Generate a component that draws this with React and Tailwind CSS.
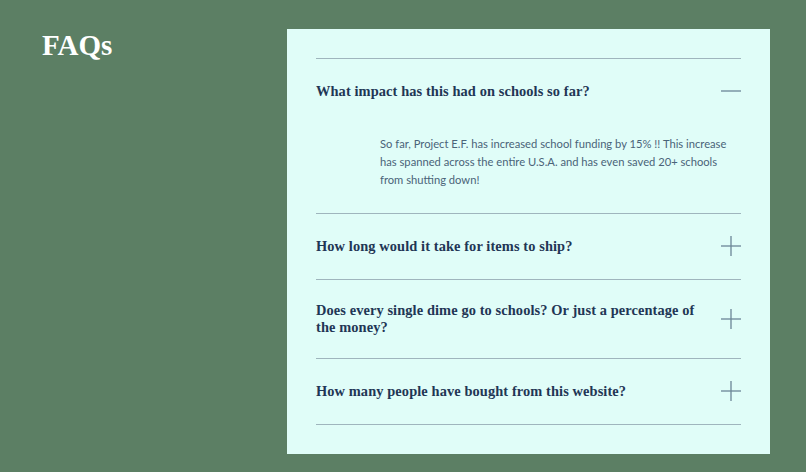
import React from "react";

const faqs = [
    {
        q: "What impact has this had on schools so far?",
        a: "So far, Project E.F. has increased school funding by 15% !! This increase has spanned across the entire U.S.A. and has even saved 20+ schools from shutting down!",
        open: true,
    },
    { q: "How long would it take for items to ship?" },
    { q: "Does every single dime go to schools? Or just a percentage of the money?" },
    { q: "How many people have bought from this website?" },
];

const Icon = ({ open }) => (
    <svg width="20" height="20" viewBox="0 0 20 20" className="shrink-0">
        <line x1="0" y1="10" x2="20" y2="10" stroke="#6b8696" strokeWidth="1.3" />
        {!open && <line x1="10" y1="0" x2="10" y2="20" stroke="#6b8696" strokeWidth="1.3" />}
    </svg>
);

const App = () => {
    return (
        <div className="min-h-[472px] w-full bg-[#5c7f64] flex items-start">
            <div className="w-[287px] pl-[42px] pt-[28px]">
                <h1 className="text-[29px] leading-[34px] font-bold text-white" style={{ fontFamily: '"Liberation Serif", serif' }}>
                    FAQs
                </h1>
            </div>

            <div className="mt-[29px] w-[483px] bg-[#e0fdf8] px-[29px] pt-[29px] pb-[29px]">
                {faqs.map((item) => (
                    <div key={item.q} className="border-t border-[#9fb5bd]">
                        <div className="flex items-center justify-between gap-6 pt-[22px] pb-[22.5px]">
                            <h3
                                className="text-[14.4px] leading-[17px] font-bold text-[#1f3655] tracking-[0.1px]"
                                style={{ fontFamily: '"Liberation Serif", serif' }}
                            >
                                {item.q}
                            </h3>
                            <Icon open={item.open} />
                        </div>
                        {item.open && (
                            <p
                                className="pl-16 pr-[12px] pt-[11px] pb-[24.5px] text-[11.2px] leading-[18px] text-[#4a6479]"
                                style={{ fontFamily: "Lato, sans-serif" }}
                            >
                                {item.a}
                            </p>
                        )}
                    </div>
                ))}
                <div className="border-t border-[#9fb5bd]" />
            </div>
        </div>
    );
};

export default App;
